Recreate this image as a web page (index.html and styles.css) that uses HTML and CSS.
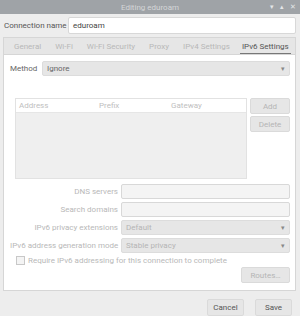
FILE: index.html
```html
<!DOCTYPE html>
<html lang="en">
<head>
  <meta charset="UTF-8" />
  <title>Editing eduroam</title>
  <link rel="stylesheet" href="styles.css">
</head>
<body>
  <div class="window">
    <div class="titlebar">
      <span class="title">Editing eduroam</span>
      <div class="controls">
        <span class="ctl">&#9662;</span>
        <span class="ctl">&#9652;</span>
        <span class="ctl">&#10005;</span>
      </div>
    </div>

    <div class="name-row">
      <label class="name-label">Connection name</label>
      <div class="entry name-entry">eduroam</div>
    </div>

    <div class="tabs">
      <span class="tab">General</span>
      <span class="tab">Wi-Fi</span>
      <span class="tab">Wi-Fi Security</span>
      <span class="tab">Proxy</span>
      <span class="tab">IPv4 Settings</span>
      <span class="tab active">IPv6 Settings</span>
    </div>

    <div class="panel">
      <div class="method-row">
        <span class="method-label">Method</span>
        <div class="combo method-combo"><span>Ignore</span><span class="arrow">&#9662;</span></div>
      </div>

      <div class="addr-block">
        <div class="addr-table">
          <div class="addr-head">
            <span class="col-addr">Address</span>
            <span class="col-prefix">Prefix</span>
            <span class="col-gw">Gateway</span>
          </div>
        </div>
        <div class="addr-buttons">
          <div class="btn small">Add</div>
          <div class="btn small">Delete</div>
        </div>
      </div>

      <div class="form">
        <span class="flabel">DNS servers</span>
        <div class="entry dim"></div>
        <span class="flabel">Search domains</span>
        <div class="entry dim"></div>
        <span class="flabel">IPv6 privacy extensions</span>
        <div class="combo"><span>Default</span><span class="arrow">&#9662;</span></div>
        <span class="flabel">IPv6 address generation mode</span>
        <div class="combo"><span>Stable privacy</span><span class="arrow">&#9662;</span></div>
      </div>

      <div class="check-row">
        <span class="checkbox"></span>
        <span>Require IPv6 addressing for this connection to complete</span>
      </div>

      <div class="routes-row">
        <div class="btn routes">Routes&hellip;</div>
      </div>
    </div>

    <div class="footer">
      <div class="btn foot">Cancel</div>
      <div class="btn foot">Save</div>
    </div>
  </div>
</body>
</html>
```

FILE: styles.css
```css
body {
  margin: 0;
  font-family: Roboto, "Liberation Sans", sans-serif;
  font-size: 8px;
  background: #ededed;
  color: #b0b0b0;
}
.window {
  width: 300px;
  height: 316px;
  background: #ededed;
  display: flex;
  flex-direction: column;
}
.titlebar {
  height: 14px;
  background: #9fa3a7;
  display: flex;
  align-items: center;
  justify-content: center;
  position: relative;
}
.title {
  color: #d4d6d8;
  font-size: 8px;
}
.controls {
  position: absolute;
  right: 4px;
  top: 0;
  height: 14px;
  display: flex;
  align-items: center;
  gap: 6px;
}
.ctl {
  color: #e4e6e8;
  font-size: 7px;
}
.name-row {
  display: flex;
  align-items: center;
  padding: 2px 4px 0 4px;
  height: 19px;
}
.name-label {
  color: #555;
  width: 64px;
}
.entry {
  background: #fff;
  border: 1px solid #d8d8d8;
  border-radius: 2px;
  height: 15px;
  box-sizing: border-box;
  display: flex;
  align-items: center;
  padding-left: 4px;
}
.name-entry {
  flex: 1;
  height: 17px;
  color: #444;
}
.tabs {
  display: flex;
  margin: 2px 4px 0 3px;
  height: 17px;
  align-items: center;
  background: #e6e6e6;
  border: 1px solid #d6d6d6;
  border-bottom: none;
  box-sizing: border-box;
  padding-left: 10px;
}
.tab {
  margin-right: 14px;
  color: #b8b8b8;
  white-space: nowrap;
}
.tab.active {
  color: #555;
  border-bottom: 1px solid #777;
  padding: 0 2px 2px;
  margin-top: 3px;
  margin-right: 0;
  margin-left: -4px;
}
.panel {
  margin: 0 4px 0 3px;
  background: #fff;
  border: 1px solid #d6d6d6;
  height: 237px;
  box-sizing: border-box;
  padding: 6px 5px 0 6px;
}
.method-row {
  display: flex;
  align-items: center;
  height: 15px;
}
.method-label {
  color: #666;
  width: 32px;
}
.combo {
  background: #e6e6e6;
  border: 1px solid #dcdcdc;
  border-radius: 2px;
  height: 15px;
  box-sizing: border-box;
  display: flex;
  align-items: center;
  justify-content: space-between;
  padding: 0 4px;
}
.method-combo {
  flex: 1;
  color: #666;
}
.arrow {
  font-size: 7px;
  color: #888;
}
.addr-block {
  display: flex;
  margin-top: 22px;
  margin-left: 5px;
  gap: 3px;
}
.addr-table {
  width: 232px;
  height: 81px;
  background: #efefef;
  border: 1px solid #e2e2e2;
  box-sizing: border-box;
}
.addr-head {
  height: 13px;
  background: #fff;
  border-bottom: 1px solid #e6e6e6;
  display: flex;
  align-items: center;
  color: #c0c0c0;
  padding-left: 3px;
}
.col-addr { width: 80px; }
.col-prefix { width: 72px; }
.addr-buttons {
  display: flex;
  flex-direction: column;
  gap: 2px;
  width: 40px;
}
.btn {
  background: #e6e6e6;
  border: 1px solid #dadada;
  border-radius: 2px;
  box-sizing: border-box;
  height: 16px;
  display: flex;
  align-items: center;
  justify-content: center;
  color: #b5b5b5;
}
.form {
  display: grid;
  grid-template-columns: 108px 1fr;
  column-gap: 3px;
  row-gap: 3px;
  margin-top: 5px;
  align-items: center;
}
.flabel {
  text-align: right;
  color: #b8b8b8;
  white-space: nowrap;
}
.form .entry {
  height: 15px;
}
.entry.dim {
  background: #f4f4f4;
}
.form .combo {
  color: #b5b5b5;
}
.check-row {
  display: flex;
  align-items: center;
  gap: 3px;
  margin-top: 3px;
  margin-left: 6px;
  color: #b8b8b8;
}
.checkbox {
  width: 7px;
  height: 7px;
  border: 1px solid #c8c8c8;
  background: #f4f4f4;
}
.routes-row {
  display: flex;
  justify-content: flex-end;
  margin-top: 2px;
}
.btn.routes {
  width: 49px;
}
.footer {
  display: flex;
  justify-content: flex-end;
  gap: 11px;
  padding: 8px 8px 0 0;
}
.btn.foot {
  width: 37px;
  height: 17px;
  color: #555;
}
```
